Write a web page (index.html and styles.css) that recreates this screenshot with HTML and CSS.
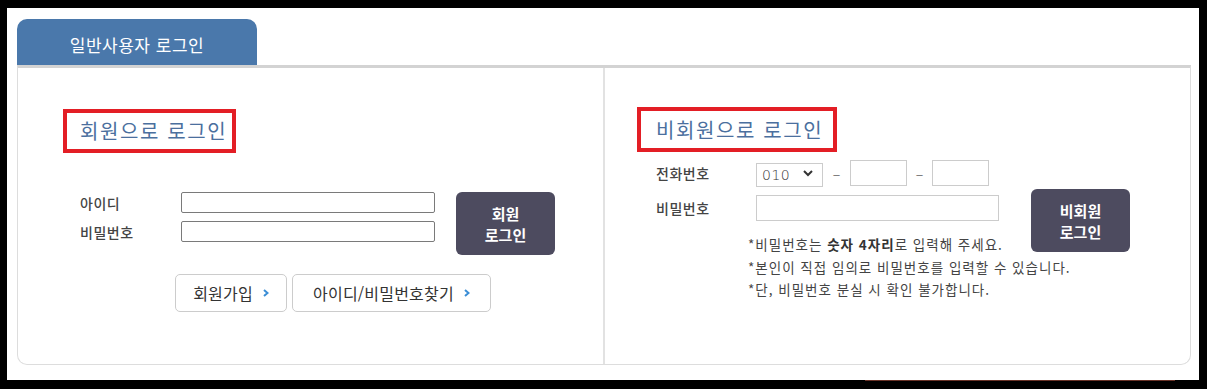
FILE: index.html
```html
<!DOCTYPE html>
<html lang="ko">
<head>
    <meta charset="UTF-8">
    <meta name="viewport" content="width=device-width, initial-scale=1.0">
    <title>로그인</title>
    <link rel="stylesheet" href="styles.css">
</head>
<body>
    <div class="frame">
        <div class="tabs">
            <div class="tab">일반사용자 로그인</div>
        </div>
        <div class="box">
            <section class="panel member">
                <h2 class="title">회원으로 로그인</h2>
                <form class="login">
                    <div class="fields">
                        <div class="row">
                            <label for="userId">아이디</label>
                            <input type="text" id="userId" name="userId">
                        </div>
                        <div class="row">
                            <label for="userPw">비밀번호</label>
                            <input type="password" id="userPw" name="userPw">
                        </div>
                    </div>
                    <button type="button" class="btn-login">회원<br>로그인</button>
                </form>
                <div class="links">
                    <a class="link join" href="#">회원가입
                        <svg width="6" height="8" viewBox="0 0 6 8"><path d="M1 1 L4.5 4 L1 7" fill="none" stroke="#3b8ed6" stroke-width="2"/></svg>
                    </a>
                    <a class="link find" href="#">아이디/비밀번호찾기
                        <svg width="6" height="8" viewBox="0 0 6 8"><path d="M1 1 L4.5 4 L1 7" fill="none" stroke="#3b8ed6" stroke-width="2"/></svg>
                    </a>
                </div>
            </section>

            <section class="panel guest">
                <h2 class="title wide">비회원으로 로그인</h2>
                <form class="guest-form">
                    <label class="g-label" for="tel1">전화번호</label>
                    <div class="phone">
                        <div class="sel">
                            <select id="tel1" name="tel1">
                                <option>010</option>
                                <option>011</option>
                                <option>016</option>
                                <option>017</option>
                            </select>
                            <svg width="10" height="7" viewBox="0 0 10 7"><path d="M1 1 L5 5 L9 1" fill="none" stroke="#333" stroke-width="2"/></svg>
                        </div>
                        <span class="dash">–</span>
                        <input type="text" class="tel" name="tel2">
                        <span class="dash">–</span>
                        <input type="text" class="tel" name="tel3">
                    </div>
                    <label class="g-label row2" for="guestPw">비밀번호</label>
                    <input type="password" id="guestPw" class="pw" name="guestPw">
                    <ul class="notes">
                        <li>*비밀번호는 <b>숫자 4자리</b>로 입력해 주세요.</li>
                        <li>*본인이 직접 임의로 비밀번호를 입력할 수 있습니다.</li>
                        <li>*단, 비밀번호 분실 시 확인 불가합니다.</li>
                    </ul>
                    <button type="button" class="btn-login guest-btn">비회원<br>로그인</button>
                </form>
            </section>
        </div>
    </div>
    <div class="peek"></div>
</body>
</html>
```

FILE: styles.css
```css
body {
    margin: 0;
    height: 389px;
    overflow: hidden;
    background-color: #000000;
    font-family: "Noto Sans CJK KR", "Noto Sans", sans-serif;
}
.frame {
    margin: 8px 8px 0 7px;
    height: 372px;
    padding: 11px 8px 0 10px;
    box-sizing: border-box;
    background-color: #ffffff;
}
.tabs {
    display: flex;
    height: 46px;
}
.tab {
    width: 240px;
    padding-top: 4px;
    box-sizing: border-box;
    display: flex;
    align-items: center;
    justify-content: center;
    background-color: #4a78ab;
    border-radius: 10px 10px 0 0;
    color: #ffffff;
    font-size: 17px;
    letter-spacing: 0.5px;
}
.box {
    display: flex;
    height: 300px;
    box-sizing: border-box;
    border: 1px solid #dddddd;
    border-top: 3px solid #d3d3d3;
    border-radius: 0 0 10px 10px;
}
.panel {
    display: flex;
    flex-direction: column;
    align-items: flex-start;
    box-sizing: border-box;
}
.member {
    width: 585px;
    padding: 41px 0 0 45px;
}
.guest {
    flex: 1;
    padding: 39px 0 0 32px;
    border-left: 2px solid #e2e2e2;
}
.title {
    margin: 0;
    padding: 0 5px 0 13px;
    border: 4px solid #e31e25;
    color: #4b6f9e;
    font-size: 20px;
    font-weight: normal;
    line-height: 36px;
    letter-spacing: 1.6px;
}
.title.wide {
    padding: 0 10px 0 15px;
    line-height: 37px;
}

/* member login */
.login {
    display: flex;
    align-items: flex-start;
    margin: 39px 0 0 17px;
}
.fields {
    display: flex;
    flex-direction: column;
    gap: 8px;
}
.row {
    display: flex;
    align-items: center;
}
.row label {
    width: 101px;
    color: #444444;
    font-size: 14px;
    font-weight: 500;
    letter-spacing: 0.5px;
}
.row input {
    width: 254px;
    height: 21px;
    padding: 0 4px;
    box-sizing: border-box;
    border: 1px solid #7a7a7a;
    border-radius: 2px;
}
.btn-login {
    width: 99px;
    height: 63px;
    margin-left: 21px;
    padding: 0;
    border: none;
    border-radius: 6px;
    background-color: #4d4b5f;
    color: #ffffff;
    font-family: inherit;
    font-size: 15px;
    font-weight: bold;
    line-height: 21px;
    cursor: pointer;
}
.links {
    display: flex;
    gap: 5px;
    margin: 19px 0 0 112px;
}
.link {
    display: flex;
    align-items: center;
    justify-content: center;
    gap: 10px;
    height: 38px;
    box-sizing: border-box;
    border: 1px solid #cccccc;
    border-radius: 5px;
    color: #333333;
    font-size: 16px;
    text-decoration: none;
    letter-spacing: 0.2px;
}
.link.join {
    width: 112px;
}
.link.find {
    width: 199px;
}

/* guest login */
.guest-form {
    display: grid;
    grid-template-columns: 100px 243px 32px 99px;
    grid-template-rows: 26px 26px auto;
    row-gap: 9px;
    margin: 8px 0 0 19px;
}
.g-label {
    grid-column: 1;
    align-self: center;
    color: #444444;
    font-size: 14px;
    font-weight: 500;
    letter-spacing: 0.5px;
}
.g-label.row2 {
    grid-row: 2;
}
.phone {
    grid-column: 2;
    grid-row: 1;
    display: flex;
    align-items: center;
}
.sel {
    position: relative;
    width: 67px;
    height: 24px;
}
.sel select {
    width: 100%;
    height: 100%;
    padding: 0 0 0 5px;
    appearance: none;
    -webkit-appearance: none;
    border: 1px solid #cccccc;
    border-radius: 0;
    background-color: #ffffff;
    color: #333333;
    font-family: "DejaVu Sans", sans-serif;
    font-size: 14px;
    font-weight: 300;
    letter-spacing: 0.5px;
}
.sel svg {
    position: absolute;
    right: 10px;
    top: 9px;
    pointer-events: none;
}
.dash {
    width: 27px;
    text-align: center;
    color: #777777;
    font-size: 14px;
}
.phone .dash + input + .dash {
    width: 25px;
}
.tel {
    width: 57px;
    height: 26px;
    box-sizing: border-box;
    border: 1px solid #cccccc;
}
.pw {
    grid-column: 2;
    grid-row: 2;
    width: 243px;
    height: 26px;
    box-sizing: border-box;
    border: 1px solid #cccccc;
}
.notes {
    grid-column: 2;
    grid-row: 3;
    margin: 3px 0 0 -8px;
    padding: 0;
    list-style: none;
    white-space: nowrap;
    color: #444444;
    font-size: 13.5px;
    line-height: 22.5px;
    letter-spacing: 1px;
}
.notes b {
    color: #333333;
}
.guest-btn {
    grid-column: 4;
    grid-row: 1 / span 3;
    align-self: start;
    margin: 29px 0 0 0;
}
.peek {
    width: 310px;
    height: 1px;
    margin-left: 865px;
    background-color: #6a3328;
}
```
